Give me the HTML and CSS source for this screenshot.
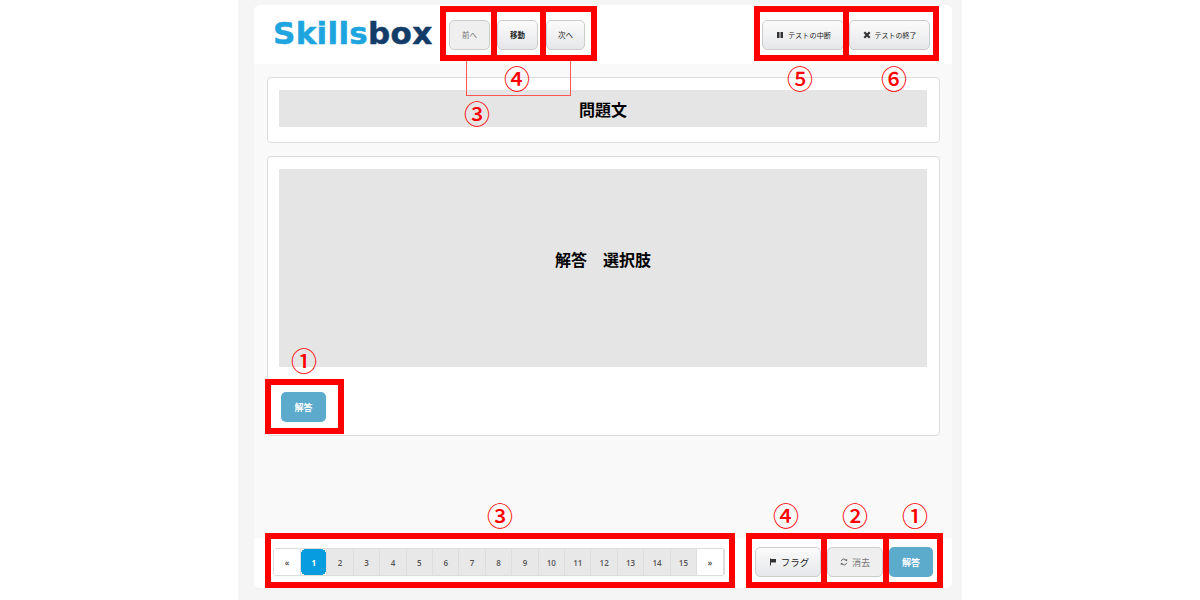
FILE: index.html
```html
<!DOCTYPE html>
<html>
<head>
    <title>Skillsbox</title>
    <link rel="stylesheet" href="styles.css">
</head>
<body>
    <div class="page-wrapper">
        <div class="test-area">
            <div class="test-card">
                <header class="topbar">
                    <div class="logo"><span class="logo-blue">Skills</span><span class="logo-navy">box</span></div>
                    <div class="nav-btns">
                        <button class="btn btn-prev is-disabled">前へ</button>
                        <button class="btn btn-move"><b>移動</b></button>
                        <button class="btn btn-next">次へ</button>
                    </div>
                    <div class="test-btns">
                        <button class="btn btn-pause">
                            <svg class="icon" viewBox="0 0 8 8"><path d="M1 1h2.500v6H1zM4.500 1H7v6H4.500z" fill="#333"/></svg>テストの中断
                        </button>
                        <button class="btn btn-end">
                            <svg class="icon" viewBox="0 0 8 8"><path d="M1.300 1.300l5.400 5.400M6.700 1.300l-5.400 5.400" stroke="#333" stroke-width="2.200"/></svg>テストの終了
                        </button>
                    </div>
                </header>

                <section class="panel panel-question">
                    <div class="placeholder placeholder-question">問題文</div>
                </section>

                <section class="panel panel-answer">
                    <div class="placeholder placeholder-answer">解答　選択肢</div>
                    <button class="btn-answer btn-answer-top">解答</button>
                </section>

                <footer class="bottombar">
                    <div class="pager">
                        <a class="page-end">«</a>
                        <a class="page-num is-current">1</a>
                        <a class="page-num">2</a>
                        <a class="page-num">3</a>
                        <a class="page-num">4</a>
                        <a class="page-num">5</a>
                        <a class="page-num">6</a>
                        <a class="page-num">7</a>
                        <a class="page-num">8</a>
                        <a class="page-num">9</a>
                        <a class="page-num">10</a>
                        <a class="page-num">11</a>
                        <a class="page-num">12</a>
                        <a class="page-num">13</a>
                        <a class="page-num">14</a>
                        <a class="page-num">15</a>
                        <a class="page-end">»</a>
                    </div>
                    <div class="action-btns">
                        <button class="btn btn-flag">
                            <svg class="icon icon-flag" viewBox="0 0 8 8"><path d="M1 0.500h1v7H1zM2 1h5v3.500H2z" fill="#333"/></svg>フラグ
                        </button>
                        <button class="btn btn-clear is-disabled">
                            <svg class="icon" viewBox="0 0 10 10"><path d="M1.500 4A3.600 3.600 0 0 1 8 3M8.500 6A3.600 3.600 0 0 1 2 7" fill="none" stroke="#666" stroke-width="1.200"/><path d="M9 0.800v3H6zM1 9.200v-3h3z" fill="#666"/></svg>消去
                        </button>
                        <button class="btn-answer btn-answer-bottom">解答</button>
                    </div>
                </footer>
            </div>
        </div>

        <!-- red call-outs drawn over the screen -->
        <div class="mark mark-prev"></div>
        <div class="mark mark-move"></div>
        <div class="mark mark-next"></div>
        <div class="mark mark-pause"></div>
        <div class="mark mark-end"></div>
        <div class="mark mark-answer"></div>
        <div class="mark mark-pager"></div>
        <div class="mark mark-flag"></div>
        <div class="mark mark-clear"></div>
        <div class="mark mark-send"></div>
        <div class="bracket"></div>

        <span class="num num-a">④</span>
        <span class="num num-b">③</span>
        <span class="num num-c">⑤</span>
        <span class="num num-d">⑥</span>
        <span class="num num-e">①</span>
        <span class="num num-f">③</span>
        <span class="num num-g">④</span>
        <span class="num num-h">②</span>
        <span class="num num-i">①</span>
    </div>
</body>
</html>
```

FILE: styles.css
```css
* {
    margin: 0;
    padding: 0;
    box-sizing: border-box;
    font-family: "Noto Sans CJK JP", "Open Sans", sans-serif;
}

body {
    background: #fff;
    overflow: hidden;
}

.page-wrapper {
    position: relative;
    width: 1200px;
    height: 600px;
}

.test-area {
    width: 724px;
    height: 600px;
    margin-left: 238px;
    padding: 5px 10px 12px 16px;
    background: #f5f5f5;
}

.test-card {
    height: 100%;
    background: #f9f9f9;
    border-radius: 6px;
    display: flex;
    flex-direction: column;
    overflow: hidden;
}

.topbar {
    height: 59px;
    background: #fff;
    display: flex;
    align-items: center;
    padding: 0 22px 0 19px;
}

.logo {
    width: 176px;
    font-family: "DejaVu Sans", sans-serif;
    font-weight: 700;
    font-size: 31px;
    letter-spacing: 0.3px;
    line-height: 1;
    margin-top: -2px;
    white-space: nowrap;
    -webkit-text-stroke: 0.5px;
}

.logo-blue {
    color: #1ea4de;
    font-family: inherit;
}

.logo-navy {
    color: #133c68;
    font-family: inherit;
}

.nav-btns {
    display: flex;
    gap: 7px;
}

.test-btns {
    display: flex;
    gap: 5px;
    margin-left: auto;
}

.btn {
    height: 30px;
    border: 1px solid #ccc;
    border-radius: 5px;
    background: linear-gradient(#fbfbfb, #e6e7ea);
    color: #222;
    font-size: 7.500px;
    display: flex;
    align-items: center;
    justify-content: center;
}

.btn-prev {
    width: 41px;
}

.btn-move {
    width: 41px;
}

.btn-next {
    width: 39px;
    margin-left: 1px;
}

.btn-pause {
    width: 82px;
    font-size: 7.200px;
    padding-left: 1px;
}

.btn-end {
    width: 81px;
    font-size: 7px;
}

.is-disabled {
    background: #efefef;
    color: #777;
}

.icon {
    width: 8px;
    height: 8px;
    margin-right: 4px;
}

.panel {
    background: #fff;
    border: 1px solid #dcdcdc;
    border-radius: 4px;
    margin: 13px 12px 0 13px;
    padding: 12px 12px 0 11px;
}

.panel-question {
    height: 66px;
}

.panel-answer {
    height: 280px;
}

.placeholder {
    background: #e5e5e5;
    color: #000;
    font-weight: 700;
    font-size: 16px;
    display: flex;
    align-items: center;
    justify-content: center;
}

.placeholder-question {
    height: 37px;
}

.placeholder-answer {
    height: 198px;
    margin-bottom: 25px;
    padding-bottom: 18px;
}

.btn-answer {
    width: 45px;
    height: 30px;
    border: none;
    border-radius: 5px;
    background: #5cabcc;
    color: #fff;
    font-size: 9px;
    font-weight: 700;
}

.btn-answer-top {
    display: block;
    margin-left: 2px;
}

.bottombar {
    margin-top: auto;
    height: 50px;
    background: #fff;
    display: flex;
    align-items: flex-start;
    justify-content: space-between;
    padding: 10px 19px 0 19px;
}

.pager {
    display: flex;
    width: 452px;
    height: 28px;
    border: 1px solid #ddd;
    border-radius: 3px;
    background: #e8e8e8;
}

.pager a {
    flex: 1;
    display: flex;
    align-items: center;
    justify-content: center;
    font-family: "Open Sans", sans-serif;
    font-size: 8px;
    font-weight: 600;
    color: #555;
    border-right: 1px solid #ddd;
}

.pager .page-end {
    flex: 0 0 27px;
    background: #fff;
    color: #444;
}

.pager .is-current {
    color: #fff;
    font-weight: 700;
    background-color: #069cdd;
    background-image:
        linear-gradient(#fff, #fff), linear-gradient(#fff, #fff),
        linear-gradient(#fff, #fff), linear-gradient(#fff, #fff),
        linear-gradient(#fff, #fff), linear-gradient(#fff, #fff),
        linear-gradient(#fff, #fff), linear-gradient(#fff, #fff);
    background-repeat: no-repeat;
    background-size: 3px 1px, 1px 3px, 3px 1px, 1px 3px, 3px 1px, 1px 3px, 3px 1px, 1px 3px;
    background-position: 0 0, 0 0, 100% 0, 100% 0, 0 100%, 0 100%, 100% 100%, 100% 100%;
}

.action-btns {
    display: flex;
    gap: 6px;
    margin-top: -1px;
}

.btn-flag {
    width: 66px;
    font-size: 9.500px;
}

.icon-flag {
    margin-left: 2px;
}

.btn-clear {
    width: 56px;
    font-size: 9px;
}

.btn-answer-bottom {
    width: 44px;
}

.mark {
    position: absolute;
    border: 6px solid #f00;
}

.mark-prev { left: 440px; top: 6px; width: 57px; height: 55px; }
.mark-move { left: 491px; top: 6px; width: 55px; height: 55px; }
.mark-next { left: 540px; top: 6px; width: 57px; height: 55px; }
.mark-pause { left: 754px; top: 6px; width: 95px; height: 55px; }
.mark-end { left: 843px; top: 6px; width: 96px; height: 55px; }
.mark-answer { left: 265px; top: 379px; width: 79px; height: 55px; }
.mark-pager { left: 265px; top: 533px; width: 470px; height: 55px; }
.mark-flag { left: 746px; top: 533px; width: 81px; height: 55px; }
.mark-clear { left: 821px; top: 533px; width: 68px; height: 55px; }
.mark-send { left: 883px; top: 533px; width: 60px; height: 55px; }

.bracket {
    position: absolute;
    left: 466px;
    top: 61px;
    width: 105px;
    height: 35px;
    border: 1px solid #f55;
    border-top: none;
}

.num {
    position: absolute;
    color: #f00;
    font-size: 26px;
    font-weight: 500;
    line-height: 28px;
    width: 28px;
    text-align: center;
}

.num-a { left: 503px; top: 64px; }
.num-b { left: 463px; top: 99px; }
.num-c { left: 786px; top: 64px; }
.num-d { left: 880px; top: 64px; }
.num-e { left: 290px; top: 346px; }
.num-f { left: 486px; top: 501px; }
.num-g { left: 772px; top: 501px; }
.num-h { left: 841px; top: 501px; }
.num-i { left: 901px; top: 501px; }
```
